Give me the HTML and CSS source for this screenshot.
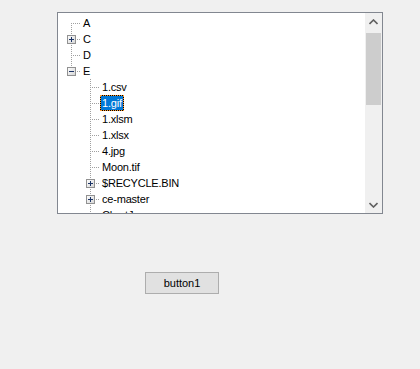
FILE: index.html
```html
<!DOCTYPE html>
<html lang="en">
<head>
  <meta charset="UTF-8">
  <title>Form1</title>
  <link rel="stylesheet" href="styles.css">
</head>
<body>

<div class="tree">
  <div class="nodes">
    <div class="row"><span class="conn first"></span><span class="label">A</span></div>
    <div class="row"><span class="conn mid"><svg class="exp" width="9" height="9"><use href="#plus"/></svg></span><span class="label">C</span></div>
    <div class="row"><span class="conn mid"></span><span class="label">D</span></div>
    <div class="row"><span class="conn last"><svg class="exp" width="9" height="9"><use href="#minus"/></svg></span><span class="label">E</span></div>
    <div class="row"><span class="ind"></span><span class="conn mid"></span><span class="label">1.csv</span></div>
    <div class="row"><span class="ind"></span><span class="conn mid"></span><span class="label selected">1.gif</span></div>
    <div class="row"><span class="ind"></span><span class="conn mid"></span><span class="label">1.xlsm</span></div>
    <div class="row"><span class="ind"></span><span class="conn mid"></span><span class="label">1.xlsx</span></div>
    <div class="row"><span class="ind"></span><span class="conn mid"></span><span class="label">4.jpg</span></div>
    <div class="row"><span class="ind"></span><span class="conn mid"></span><span class="label">Moon.tif</span></div>
    <div class="row"><span class="ind"></span><span class="conn mid"><svg class="exp" width="9" height="9"><use href="#plus"/></svg></span><span class="label">$RECYCLE.BIN</span></div>
    <div class="row"><span class="ind"></span><span class="conn mid"><svg class="exp" width="9" height="9"><use href="#plus"/></svg></span><span class="label">ce-master</span></div>
    <div class="row"><span class="ind"></span><span class="conn mid"></span><span class="label">ChartJs</span></div>
  </div>
  <div class="vscroll">
    <div class="arrow">
      <svg width="9" height="6"><path d="M0.5 5L4.5 1L8.5 5" fill="none" stroke="#606060" stroke-width="1.6"/></svg>
    </div>
    <div class="thumb"></div>
    <div class="track"></div>
    <div class="arrow">
      <svg width="9" height="6"><path d="M0.5 1L4.5 5L8.5 1" fill="none" stroke="#606060" stroke-width="1.6"/></svg>
    </div>
  </div>
</div>

<button class="button1">button1</button>

<svg width="0" height="0" class="defs">
  <defs>
    <linearGradient id="boxfill" x1="0" y1="0" x2="1" y2="1">
      <stop offset="0" stop-color="#ffffff"/>
      <stop offset="1" stop-color="#d4d4d4"/>
    </linearGradient>
    <g id="plus">
      <rect x="0.5" y="0.5" width="8" height="8" fill="url(#boxfill)" stroke="#919191"/>
      <path d="M2 4.5h5M4.5 2v5" stroke="#1c3466"/>
    </g>
    <g id="minus">
      <rect x="0.5" y="0.5" width="8" height="8" fill="url(#boxfill)" stroke="#919191"/>
      <path d="M2 4.5h5" stroke="#1c3466"/>
    </g>
  </defs>
</svg>

</body>
</html>
```

FILE: styles.css
```css
body {
  margin: 0;
  padding-top: 12px;
  height: 357px;
  background-color: #f0f0f0;
  font-family: "Liberation Sans", Arial, sans-serif;
  font-size: 11px;
  color: #000;
}
.defs {
  display: block;
}
.tree {
  display: flex;
  width: 324px;
  height: 200px;
  margin-left: 57px;
  border: 1px solid #828790;
  background-color: #fff;
}
.nodes {
  flex: 1;
  overflow: hidden;
  padding: 2px 0 0 4px;
}
.row {
  display: flex;
  height: 16px;
  line-height: 16px;
  white-space: nowrap;
}
.ind {
  width: 19px;
  flex: none;
}
.conn {
  width: 19px;
  height: 16px;
  flex: none;
  background-repeat: no-repeat;
  background-image:
    repeating-linear-gradient(to right, #a0a0a0 0 1px, transparent 1px 2px),
    repeating-linear-gradient(to bottom, #a0a0a0 0 1px, transparent 1px 2px);
  background-size: 10px 1px, 1px 16px;
  background-position: 9px 8px, 9px 0;
}
.conn.first {
  background-size: 10px 1px, 1px 8px;
  background-position: 9px 8px, 9px 8px;
}
.conn.last {
  background-size: 10px 1px, 1px 8px;
  background-position: 9px 8px, 9px 0;
}
.exp {
  display: block;
  margin: 4px 0 0 5px;
}
.label {
  padding: 0 1px;
  border: 1px solid transparent;
  line-height: 14px;
  letter-spacing: -0.2px;
}
.label.selected {
  color: #fff;
  border: 1px dotted #ff9a2e;
  background: linear-gradient(#0078d7, #0078d7) padding-box, #000;
}
.vscroll {
  width: 17px;
  flex: none;
  display: flex;
  flex-direction: column;
  background-color: #f0f0f0;
}
.arrow {
  height: 17px;
  display: flex;
  align-items: center;
  justify-content: center;
}
.arrow svg {
  display: block;
}
.thumb {
  height: 72px;
  margin: 3px 1px 0 1px;
  background-color: #cdcdcd;
}
.track {
  flex: 1;
}
.button1 {
  display: block;
  width: 74px;
  height: 22px;
  margin: 58px 0 0 145px;
  padding: 0;
  border: 1px solid #adadad;
  background-color: #e1e1e1;
  font-family: "Liberation Sans", Arial, sans-serif;
  font-size: 11px;
  color: #000;
}
```
